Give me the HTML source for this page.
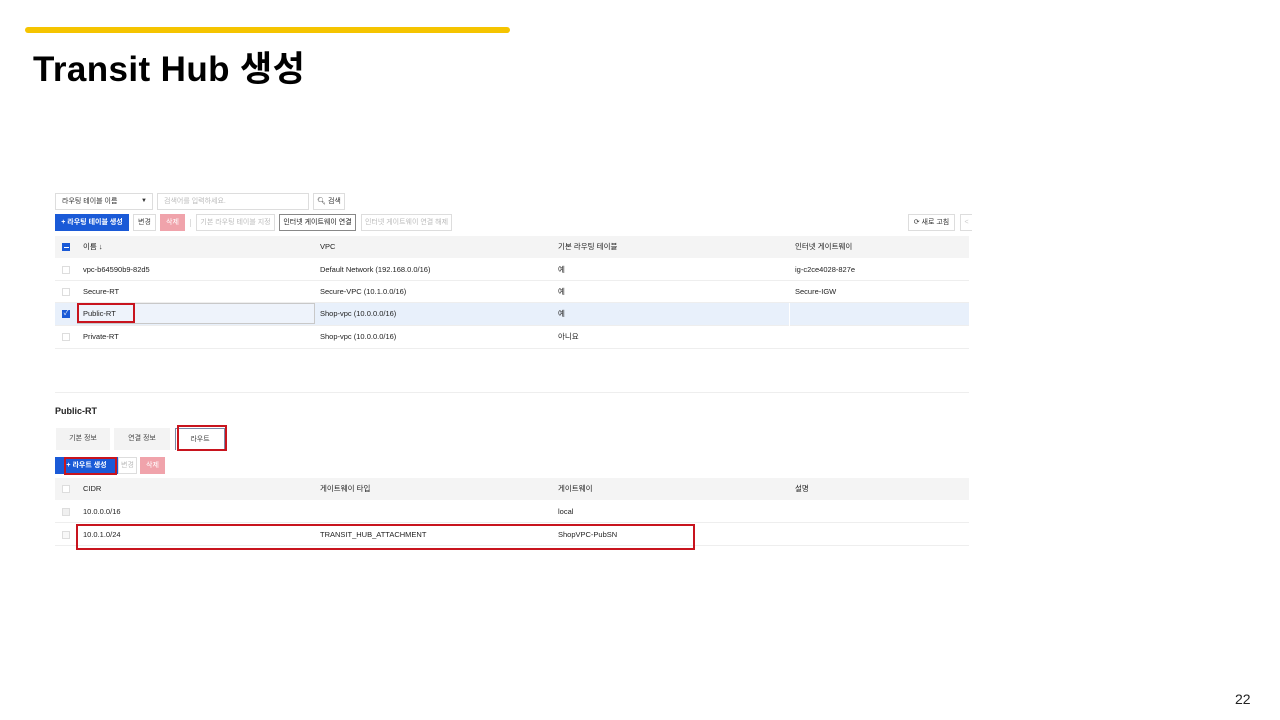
<!DOCTYPE html>
<html><head><meta charset="utf-8"><style>
*{margin:0;padding:0;box-sizing:border-box}
body{width:1280px;height:720px;background:#fff;position:relative;overflow:hidden;font-family:"Liberation Sans","Noto Sans CJK KR",sans-serif;color:#222}
.a{position:absolute}
.t{font-size:7.5px;white-space:nowrap;line-height:10px;height:10px}
.btn{position:absolute;height:17px;border:1px solid #ddd;background:#fff;font-size:7px;color:#444;text-align:center;line-height:15px;white-space:nowrap}
.row{position:absolute;left:55px;width:914px;border-bottom:1px solid #eee}
.cb{position:absolute;width:8px;height:8px;border:1px solid #ddd;background:#fff}
.red{position:absolute;border:2px solid #c8141e}
</style></head><body>
<div class="a" style="left:25px;top:27px;width:485px;height:6px;background:#f5c400;border-radius:3px"></div>
<div class="a" style="left:33px;top:41px;font-size:35px;font-weight:bold;color:#000;letter-spacing:0.4px">Transit Hub 생성</div>

<div class="btn" style="left:55px;top:193px;width:98px;text-align:left;padding-left:6px;color:#333">라우팅 테이블 이름<span style="position:absolute;right:5px;font-size:6px">▼</span></div>
<div class="btn" style="left:157px;top:193px;width:152px;text-align:left;padding-left:6px;color:#bbb">검색어를 입력하세요.</div>
<div class="btn" style="left:313px;top:193px;width:32px;color:#333">🔍︎ 검색</div>

<div class="btn" style="left:55px;top:214px;width:74px;background:#1a5ad7;border-color:#1a5ad7;color:#fff;font-weight:bold">+ 라우팅 테이블 생성</div>
<div class="btn" style="left:133px;top:214px;width:23px">변경</div>
<div class="btn" style="left:160px;top:214px;width:25px;background:#f0a3ab;border-color:#f0a3ab;color:#fff">삭제</div>
<div class="a" style="left:190px;top:219px;width:1px;height:8px;background:#ddd"></div>
<div class="btn" style="left:196px;top:214px;width:79px;color:#bbb">기본 라우팅 테이블 지정</div>
<div class="btn" style="left:279px;top:214px;width:77px;border-color:#888;color:#222">인터넷 게이트웨이 연결</div>
<div class="btn" style="left:361px;top:214px;width:91px;color:#bbb">인터넷 게이트웨이 연결 해제</div>
<div class="btn" style="left:908px;top:214px;width:47px;color:#333">⟳ 새로 고침</div>
<div class="btn" style="left:960px;top:214px;width:12px;color:#ccc;border-right:none">&lt;</div>

<div class="row" style="top:236px;height:22px;background:#f4f4f4;border:none"></div>
<div class="a" style="left:62px;top:243px;width:8px;height:8px;background:#1a5ad7"><div style="margin:3.5px 1.5px;height:1px;background:#fff"></div></div>
<div class="a t" style="left:83px;top:242px">이름 ↓</div>
<div class="a t" style="left:320px;top:242px">VPC</div>
<div class="a t" style="left:558px;top:242px">기본 라우팅 테이블</div>
<div class="a t" style="left:795px;top:242px">인터넷 게이트웨이</div>

<div class="row" style="top:258px;height:23px"></div>
<div class="cb" style="left:62px;top:266px"></div>
<div class="a t" style="left:83px;top:265px">vpc-b64590b9-82d5</div><div class="a t" style="left:320px;top:265px">Default Network (192.168.0.0/16)</div><div class="a t" style="left:558px;top:265px">예</div><div class="a t" style="left:795px;top:265px">ig-c2ce4028-827e</div>
<div class="row" style="top:281px;height:22px"></div>
<div class="cb" style="left:62px;top:288px"></div>
<div class="a t" style="left:83px;top:287px">Secure-RT</div><div class="a t" style="left:320px;top:287px">Secure-VPC (10.1.0.0/16)</div><div class="a t" style="left:558px;top:287px">예</div><div class="a t" style="left:795px;top:287px">Secure-IGW</div>
<div class="row" style="top:303px;height:23px;background:#e8f0fb"></div>
<div class="a" style="left:789px;top:303px;width:1px;height:23px;background:#fff"></div>
<div class="a" style="left:77px;top:303px;width:238px;height:21px;border:1px solid #c8c8c8;background:#eef3fb"></div>
<div class="a" style="left:62px;top:310px;width:8px;height:8px;background:#1a5ad7;color:#fff;font-size:7px;line-height:8px;text-align:center">✓</div>
<div class="a t" style="left:83px;top:309px">Public-RT</div><div class="a t" style="left:320px;top:309px">Shop-vpc (10.0.0.0/16)</div><div class="a t" style="left:558px;top:309px">예</div>
<div class="red" style="left:77px;top:303px;width:58px;height:20px"></div>
<div class="row" style="top:326px;height:23px"></div>
<div class="cb" style="left:62px;top:333px"></div>
<div class="a t" style="left:83px;top:332px">Private-RT</div><div class="a t" style="left:320px;top:332px">Shop-vpc (10.0.0.0/16)</div><div class="a t" style="left:558px;top:332px">아니요</div>

<div class="a" style="left:55px;top:392px;width:914px;height:1px;background:#eee"></div>
<div class="a" style="left:55px;top:406px;font-size:9px;font-weight:bold;color:#222">Public-RT</div>

<div class="a" style="left:56px;top:428px;width:54px;height:22px;background:#f3f3f3;font-size:7px;text-align:center;line-height:22px;color:#444">기본 정보</div>
<div class="a" style="left:114px;top:428px;width:56px;height:22px;background:#f3f3f3;font-size:7px;text-align:center;line-height:22px;color:#444">연결 정보</div>
<div class="a" style="left:175px;top:428px;width:50px;height:22px;background:#fff;border:1px solid #7a8aa8;border-bottom:none;font-size:7px;text-align:center;line-height:22px;color:#444">라우트</div>
<div class="red" style="left:177px;top:425px;width:50px;height:26px"></div>

<div class="btn" style="left:55px;top:457px;width:63px;background:#1a5ad7;border-color:#1a5ad7;color:#fff;font-weight:bold">+ 라우트 생성</div>
<div class="btn" style="left:118px;top:457px;width:19px;color:#bbb">변경</div>
<div class="btn" style="left:140px;top:457px;width:25px;background:#f0a3ab;border-color:#f0a3ab;color:#fff">삭제</div>
<div class="red" style="left:64px;top:457px;width:53px;height:18px"></div>

<div class="row" style="top:478px;height:22px;background:#f4f4f4;border:none"></div>
<div class="cb" style="left:62px;top:485px"></div>
<div class="a t" style="left:83px;top:484px">CIDR</div><div class="a t" style="left:320px;top:484px">게이트웨이 타입</div><div class="a t" style="left:558px;top:484px">게이트웨이</div><div class="a t" style="left:795px;top:484px">설명</div>
<div class="row" style="top:500px;height:23px"></div>
<div class="cb" style="left:62px;top:508px;background:#f0f0f0"></div>
<div class="a t" style="left:83px;top:507px">10.0.0.0/16</div><div class="a t" style="left:558px;top:507px">local</div>
<div class="row" style="top:523px;height:23px"></div>
<div class="cb" style="left:62px;top:531px;background:#f8f8f8"></div>
<div class="a t" style="left:83px;top:530px">10.0.1.0/24</div><div class="a t" style="left:320px;top:530px">TRANSIT_HUB_ATTACHMENT</div><div class="a t" style="left:558px;top:530px">ShopVPC-PubSN</div>
<div class="red" style="left:76px;top:524px;width:619px;height:26px"></div>

<div class="a" style="left:1235px;top:691px;font-size:14px;color:#222">22</div>
</body></html>
